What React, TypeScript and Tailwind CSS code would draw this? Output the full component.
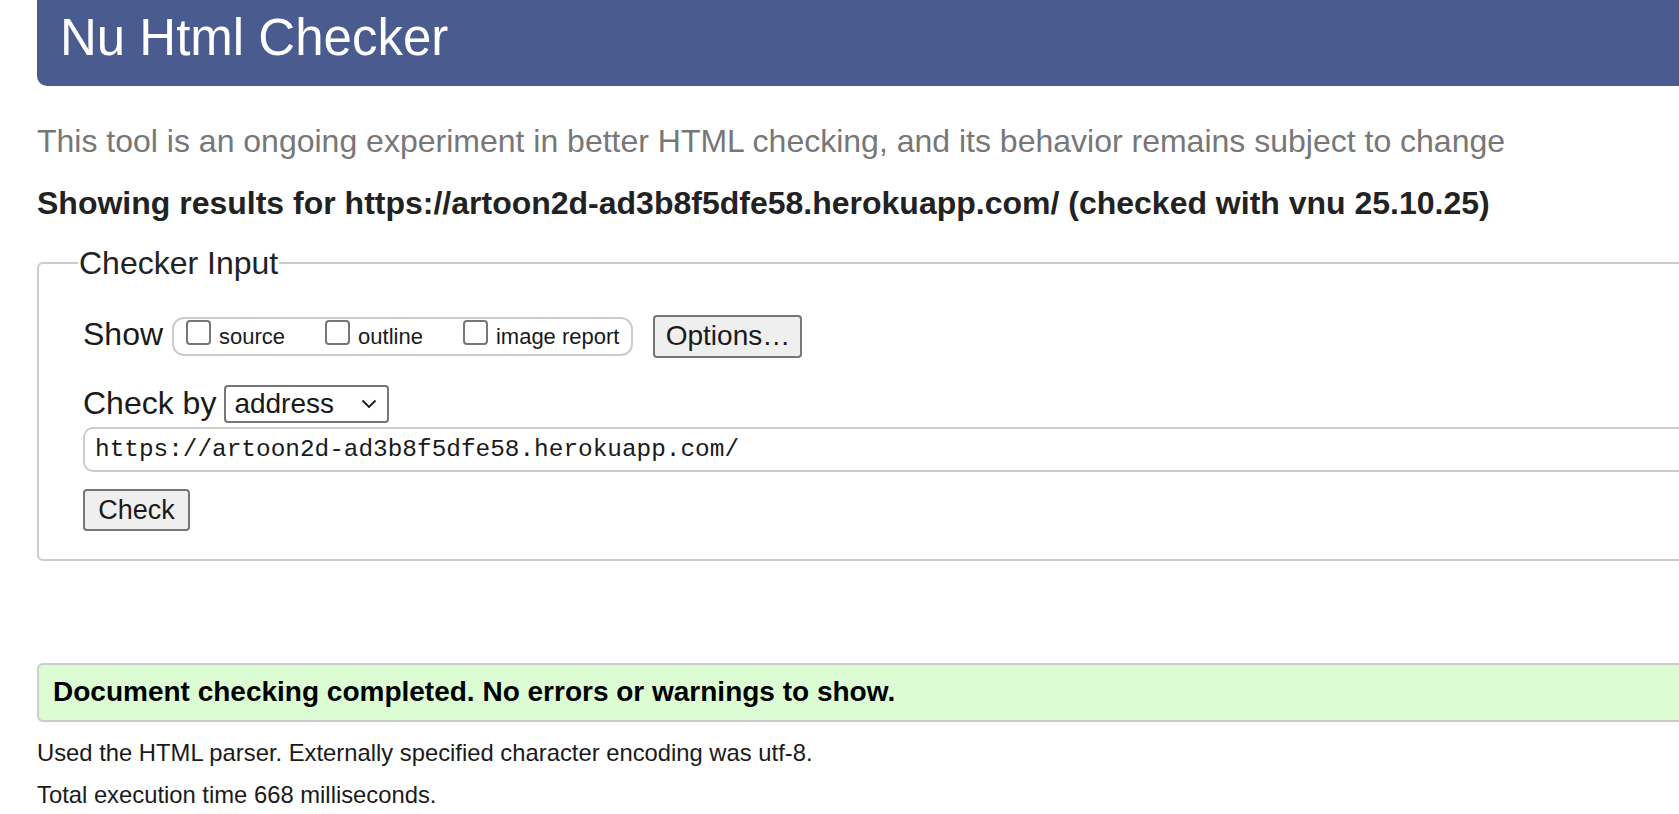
import { useState } from "react"

const Checkbox = ({ label }: { label: string }) => {
  const [checked, setChecked] = useState(false)
  return (
    <label className="flex items-start gap-[8px]">
      <button
        type="button"
        onClick={() => setChecked(!checked)}
        className="mt-[1px] h-[25px] w-[25px] shrink-0 rounded-[4px] border-2 border-[#767676] bg-white"
      />
      <span className="mt-[4px] text-[22px] leading-[28px] text-[#1a1a1a]">{label}</span>
    </label>
  )
}

export default function App() {
  const [url, setUrl] = useState("https://artoon2d-ad3b8f5dfe58.herokuapp.com/")

  return (
    <div className="h-[814px] w-full overflow-hidden bg-white">
      <div className="w-[1760px] font-['Liberation_Sans',Arial,sans-serif] text-[#1a1a1a]">
        <header className="ml-[37px] h-[86px] rounded-bl-[10px] bg-[#4a5b8f] pl-[23px] pt-[9px]">
          <h1 className="text-[51px] leading-[58px] text-white">Nu Html Checker</h1>
        </header>

        <p className="ml-[37px] mt-[37px] text-[32px] leading-[36px] text-[#777]">
          This tool is an ongoing experiment in better HTML checking, and its behavior remains subject to change
        </p>

        <h2 className="ml-[37px] mt-[26px] text-[32px] font-bold leading-[36px] text-[#222]">
          Showing results for https://artoon2d-ad3b8f5dfe58.herokuapp.com/ (checked with vnu 25.10.25)
        </h2>

        <fieldset className="ml-[37px] mt-[24px] rounded-[6px] border-2 border-[#ccc] pb-[28px] pl-[44px]">
          <legend className="-ml-[5px] px-[1px] text-[32px] leading-[36px] text-[#222]">Checker Input</legend>

          <div className="mt-[34px] flex h-[43px] items-center">
            <span className="mb-[5px] text-[32px] leading-[36px]">Show</span>
            <div className="ml-[9px] flex h-[39px] items-start gap-[40px] rounded-[12px] border-2 border-[#ccc] pl-[12px] pr-[12px]">
              <Checkbox label="source" />
              <Checkbox label="outline" />
              <Checkbox label="image report" />
            </div>
            <button
              type="button"
              className="ml-[20px] h-[43px] w-[149px] rounded-[4px] border-2 border-[#767676] bg-[#efefef] pb-[2px] text-[28px] leading-[36px]"
            >
              Options…
            </button>
          </div>

          <div className="mt-[27px] flex h-[38px] items-center">
            <span className="mb-[2px] text-[32px] leading-[36px]">Check by</span>
            <div className="ml-[8px] flex h-[38px] w-[165px] items-center justify-between rounded-[4px] border-2 border-[#767676] pl-[8px] pr-[10px]">
              <span className="text-[28px] leading-[32px]">address</span>
              <svg width="16" height="10" viewBox="0 0 16 10" fill="none">
                <path d="M1.5 1.5 8 8l6.5-6.5" stroke="#1a1a1a" strokeWidth="1.8" />
              </svg>
            </div>
          </div>

          <input
            value={url}
            onChange={(e) => setUrl(e.target.value)}
            className="mt-[4px] block h-[45px] w-[1700px] rounded-[10px] border-2 border-[#ccc] pl-[10px] font-['Liberation_Mono',monospace] text-[24.4px] text-[#1a1a1a] outline-none"
          />

          <button
            type="button"
            className="mt-[17px] block h-[42px] w-[107px] rounded-[4px] border-2 border-[#767676] bg-[#efefef] text-[27px] leading-[36px]"
          >
            Check
          </button>
        </fieldset>

        <div className="ml-[37px] mt-[102px] h-[59px] rounded-[6px] border-2 border-[#ccc] bg-[#dcfcd4] pl-[14px] pt-[11px]">
          <p className="text-[28px] font-bold leading-[32px] text-black">
            Document checking completed. No errors or warnings to show.
          </p>
        </div>

        <p className="ml-[37px] mt-[17px] text-[23.8px] leading-[28px]">
          Used the HTML parser. Externally specified character encoding was utf-8.
        </p>
        <p className="ml-[37px] mt-[14px] text-[23.8px] leading-[28px]">Total execution time 668 milliseconds.</p>
      </div>
    </div>
  )
}
